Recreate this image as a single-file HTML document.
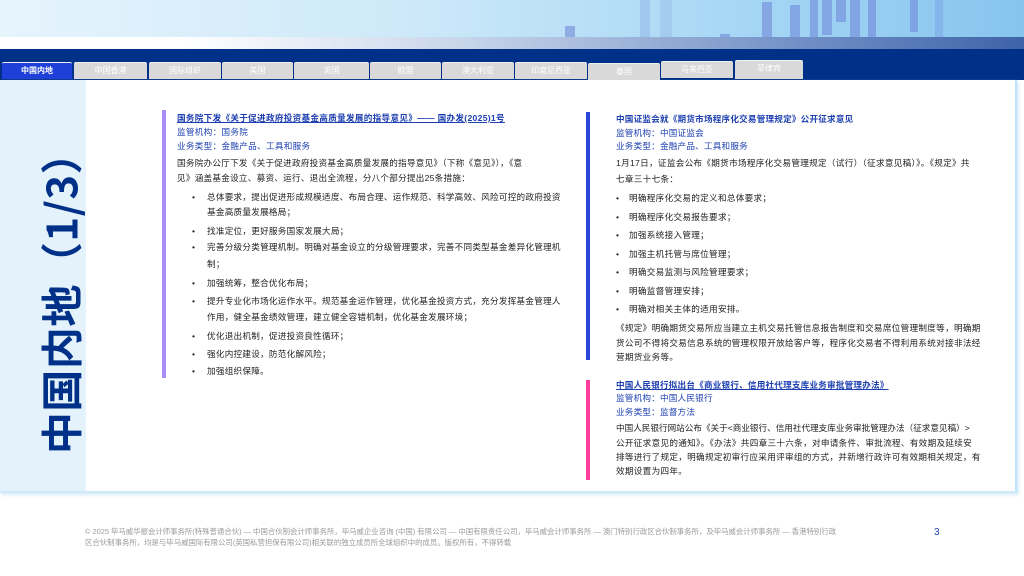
<!DOCTYPE html>
<html><head><meta charset="utf-8"><style>
*{margin:0;padding:0;box-sizing:border-box}
body{width:1024px;height:576px;position:relative;overflow:hidden;background:#fff;font-family:"Liberation Sans","Noto Sans CJK SC",sans-serif}
.ban{position:absolute;left:0;top:0;width:1024px;height:37px;background:linear-gradient(90deg,#e6f4fc 0%,#cde9f9 40%,#a9d8f5 70%,#86c4ee 100%);overflow:hidden}
.bar{position:absolute;background:rgba(110,130,215,.55)}
.strip{position:absolute;left:0;top:37px;width:1024px;height:12px;background:linear-gradient(90deg,#fff 0%,#fff 18%,#c8d6ea 45%,#6d8cc4 80%,#3f63a8 100%)}
.navy{position:absolute;left:0;top:49px;width:1024px;height:31px;background:#003087}
.tab{position:absolute;top:62px;height:17px;background:#d9d9d9;border-top:1px solid #f0f0f0;color:#fff;font-size:8px;text-align:center;line-height:16px;border-radius:2px 2px 0 0}
.tab.a{background:#1e3fd8;color:#fff;font-weight:bold}
.left{position:absolute;left:0;top:80px;width:86px;height:412px;background:#e3f2fb}
.box{position:absolute;left:0;top:80px;width:1017px;height:413px;border-right:2px solid #bfe3f8;border-bottom:2px solid #cfe9f9;box-shadow:2px 2px 3px #d5ecfa}
.vt{position:absolute;left:60px;top:293px;transform:translate(-50%,-50%) rotate(-90deg);white-space:nowrap;font-size:42px;font-weight:bold;color:#003087;font-family:"Noto Sans CJK SC",sans-serif;letter-spacing:0.5px}
.l{position:absolute;white-space:nowrap;font-size:8.6px;color:#222;line-height:10px;transform:translateY(-5px)}
.L .l{letter-spacing:0.25px}
.R .l{letter-spacing:0.3px}
.L .l.t,.L .l.h{letter-spacing:0.3px}
.R .l.t,.R .l.h{letter-spacing:0.2px}
.t{color:#1d3fb0;}
.h{color:#1d3fb0;text-decoration:underline;font-weight:bold}
.vb{position:absolute;width:4px}
.f{position:absolute;left:85px;font-size:7.4px;color:#9a9a9a;white-space:nowrap}
</style></head><body>
<div class="ban">
<div class="bar" style="left:565px;top:26px;width:10px;height:12px"></div>
<div class="bar" style="left:640px;top:0;width:10px;height:38px;opacity:.4"></div>
<div class="bar" style="left:660px;top:0;width:12px;height:38px;opacity:.3"></div>
<div class="bar" style="left:720px;top:34px;width:10px;height:4px"></div>
<div class="bar" style="left:762px;top:2px;width:10px;height:36px"></div>
<div class="bar" style="left:790px;top:5px;width:10px;height:33px"></div>
<div class="bar" style="left:810px;top:0;width:8px;height:38px"></div>
<div class="bar" style="left:822px;top:0;width:10px;height:35px"></div>
<div class="bar" style="left:836px;top:0;width:10px;height:22px"></div>
<div class="bar" style="left:850px;top:0;width:10px;height:38px"></div>
<div class="bar" style="left:868px;top:0;width:8px;height:38px"></div>
<div class="bar" style="left:910px;top:0;width:8px;height:32px"></div>
<div class="bar" style="left:935px;top:0;width:8px;height:38px;opacity:.5"></div>
</div>
<div class="strip"></div>
<div class="navy"></div>
<div class="tab a" style="left:2px;width:70px">中国内地</div>
<div class="tab" style="left:74px;width:73px">中国香港</div>
<div class="tab" style="left:149px;width:72px">国际组织</div>
<div class="tab" style="left:222px;width:71px">美国</div>
<div class="tab" style="left:294px;width:75px">英国</div>
<div class="tab" style="left:370px;width:71px">欧盟</div>
<div class="tab" style="left:442px;width:72px">澳大利亚</div>
<div class="tab" style="left:515px;width:72px">印度尼西亚</div>
<div class="tab" style="left:588px;width:72px;top:63px">泰国</div>
<div class="tab" style="left:661px;width:72px;top:61px">马来西亚</div>
<div class="tab" style="left:735px;width:68px;top:60px;height:19px">菲律宾</div>
<div class="left"></div>
<div class="box"></div>
<div class="vt">中国内地（1/3）</div>

<div class="L">
<div class="vb" style="left:162px;top:110px;height:268px;background:#a98cf5"></div>
<div class="l h" style="left:177px;top:118px">国务院下发《关于促进政府投资基金高质量发展的指导意见》—— 国办发(2025)1号</div>
<div class="l t" style="left:177px;top:132px">监管机构：国务院</div>
<div class="l t" style="left:177px;top:146px">业务类型：金融产品、工具和服务</div>
<div class="l" style="left:177px;top:163px">国务院办公厅下发《关于促进政府投资基金高质量发展的指导意见》（下称《意见》），《意</div>
<div class="l" style="left:177px;top:178px">见》涵盖基金设立、募资、运行、退出全流程，分八个部分提出25条措施：</div>
<div class="l" style="left:192px;top:197px">•</div><div class="l" style="left:207px;top:197px">总体要求，提出促进形成规模适度、布局合理、运作规范、科学高效、风险可控的政府投资</div>
<div class="l" style="left:207px;top:212px">基金高质量发展格局；</div>
<div class="l" style="left:192px;top:231px">•</div><div class="l" style="left:207px;top:231px">找准定位，更好服务国家发展大局；</div>
<div class="l" style="left:192px;top:247px">•</div><div class="l" style="left:207px;top:247px">完善分级分类管理机制。明确对基金设立的分级管理要求，完善不同类型基金差异化管理机</div>
<div class="l" style="left:207px;top:264px">制；</div>
<div class="l" style="left:192px;top:283px">•</div><div class="l" style="left:207px;top:283px">加强统筹，整合优化布局；</div>
<div class="l" style="left:192px;top:301px">•</div><div class="l" style="left:207px;top:301px">提升专业化市场化运作水平。规范基金运作管理，优化基金投资方式，充分发挥基金管理人</div>
<div class="l" style="left:207px;top:317px">作用，健全基金绩效管理，建立健全容错机制，优化基金发展环境；</div>
<div class="l" style="left:192px;top:336px">•</div><div class="l" style="left:207px;top:336px">优化退出机制，促进投资良性循环；</div>
<div class="l" style="left:192px;top:354px">•</div><div class="l" style="left:207px;top:354px">强化内控建设，防范化解风险；</div>
<div class="l" style="left:192px;top:371px">•</div><div class="l" style="left:207px;top:371px">加强组织保障。</div>
</div>

<div class="R">
<div class="vb" style="left:586px;top:112px;height:248px;background:#2a45d8"></div>
<div class="l t" style="left:616px;top:119px;font-weight:bold">中国证监会就《期货市场程序化交易管理规定》公开征求意见</div>
<div class="l t" style="left:616px;top:133px">监管机构：中国证监会</div>
<div class="l t" style="left:616px;top:146px">业务类型：金融产品、工具和服务</div>
<div class="l" style="left:616px;top:163px">1月17日，证监会公布《期货市场程序化交易管理规定（试行）（征求意见稿）》。《规定》共</div>
<div class="l" style="left:616px;top:179px">七章三十七条：</div>
<div class="l" style="left:616px;top:198px">•</div><div class="l" style="left:629px;top:198px">明确程序化交易的定义和总体要求；</div>
<div class="l" style="left:616px;top:217px">•</div><div class="l" style="left:629px;top:217px">明确程序化交易报告要求；</div>
<div class="l" style="left:616px;top:235px">•</div><div class="l" style="left:629px;top:235px">加强系统接入管理；</div>
<div class="l" style="left:616px;top:254px">•</div><div class="l" style="left:629px;top:254px">加强主机托管与席位管理；</div>
<div class="l" style="left:616px;top:272px">•</div><div class="l" style="left:629px;top:272px">明确交易监测与风险管理要求；</div>
<div class="l" style="left:616px;top:291px">•</div><div class="l" style="left:629px;top:291px">明确监督管理安排；</div>
<div class="l" style="left:616px;top:309px">•</div><div class="l" style="left:629px;top:309px">明确对相关主体的适用安排。</div>
<div class="l" style="left:616px;top:328px">《规定》明确期货交易所应当建立主机交易托管信息报告制度和交易席位管理制度等，明确期</div>
<div class="l" style="left:616px;top:343px">货公司不得将交易信息系统的管理权限开放给客户等，程序化交易者不得利用系统对接非法经</div>
<div class="l" style="left:616px;top:357px">营期货业务等。</div>

<div class="vb" style="left:586px;top:380px;height:100px;background:#ff3d9e"></div>
<div class="l h" style="left:616px;top:385px">中国人民银行拟出台《商业银行、信用社代理支库业务审批管理办法》</div>
<div class="l t" style="left:616px;top:398px">监管机构：中国人民银行</div>
<div class="l t" style="left:616px;top:412px">业务类型：监督方法</div>
<div class="l" style="left:616px;top:428px;letter-spacing:0">中国人民银行网站公布《关于&lt;商业银行、信用社代理支库业务审批管理办法（征求意见稿）&gt;</div>
<div class="l" style="left:616px;top:443px">公开征求意见的通知》。《办法》共四章三十六条，对申请条件、审批流程、有效期及延续安</div>
<div class="l" style="left:616px;top:457px">排等进行了规定，明确规定初审行应采用评审组的方式，并新增行政许可有效期相关规定，有</div>
<div class="l" style="left:616px;top:471px">效期设置为四年。</div>
</div>

<div class="f" style="top:526px">© 2025 毕马威华振会计师事务所(特殊普通合伙) — 中国合伙制会计师事务所，毕马威企业咨询 (中国) 有限公司 — 中国有限责任公司，毕马威会计师事务所 — 澳门特别行政区合伙制事务所，及毕马威会计师事务所 — 香港特别行政</div>
<div class="f" style="top:537px">区合伙制事务所，均是与毕马威国际有限公司(英国私营担保有限公司)相关联的独立成员所全球组织中的成员。版权所有，不得转载</div>
<div style="position:absolute;left:934px;top:527px;font-size:10px;color:#1d3fb0">3</div>
</body></html>
